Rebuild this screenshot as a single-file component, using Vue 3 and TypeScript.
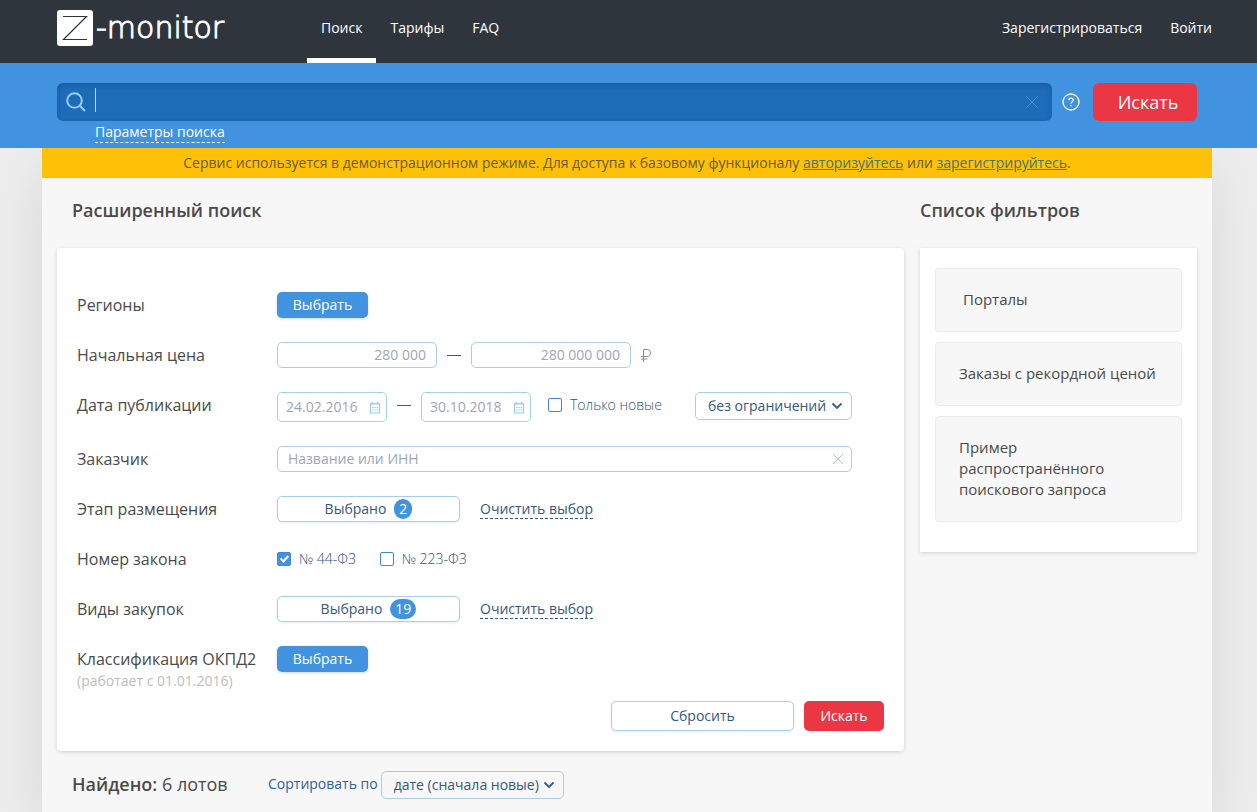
<script setup lang="ts">
import { ref } from 'vue'

interface NavItem {
  label: string
  active?: boolean
}

const nav: NavItem[] = [
  { label: 'Поиск', active: true },
  { label: 'Тарифы' },
  { label: 'FAQ' },
]

const query = ref('')
const priceFrom = ref('')
const priceTo = ref('')
const dateFrom = ref('')
const dateTo = ref('')
const customer = ref('')
const onlyNew = ref(false)
const law44 = ref(true)
const law223 = ref(false)
const period = ref('none')
const sort = ref('new')
const stages = ref(2)
const kinds = ref(19)

const filters: string[] = [
  'Порталы',
  'Заказы с рекордной ценой',
  'Пример распространённого поискового запроса',
]

function reset(): void {
  priceFrom.value = ''
  priceTo.value = ''
  dateFrom.value = ''
  dateTo.value = ''
  customer.value = ''
  onlyNew.value = false
}
</script>

<template>
  <div class="page">
    <header class="top">
      <div class="wrap top-inner">
        <a class="logo" href="#" aria-label="Z-monitor">
          <svg class="logo-mark" viewBox="0 0 36 36" aria-hidden="true">
            <rect width="36" height="36" rx="3" fill="#fff" />
            <path d="M6 6.5H29.5L6.5 29.5H30" fill="none" stroke="#2f353d" stroke-width="1.2" />
          </svg>
          <span class="logo-text">-monitor</span>
        </a>
        <nav class="nav">
          <a v-for="item in nav" :key="item.label" href="#" :class="{ active: item.active }">{{ item.label }}</a>
        </nav>
        <div class="account">
          <a href="#">Зарегистрироваться</a>
          <a href="#">Войти</a>
        </div>
      </div>
    </header>

    <section class="search">
      <div class="wrap search-inner">
        <form class="search-row" @submit.prevent>
          <div class="search-box">
            <svg class="lens" viewBox="0 0 20 20" aria-hidden="true">
              <circle cx="8.5" cy="8.5" r="7.3" />
              <path d="M13.5 13.5L19 19" />
            </svg>
            <span class="caret"></span>
            <input v-model="query" type="text" aria-label="Поиск" />
            <button class="clear" type="button" aria-label="Очистить" @click="query = ''">
              <svg viewBox="0 0 14 14"><path d="M1 1L13 13M13 1L1 13" /></svg>
            </button>
          </div>
          <button class="help" type="button" aria-label="Помощь">
            <svg viewBox="0 0 18 18">
              <circle cx="9" cy="9" r="8" />
              <path d="M6.8 7.3C6.8 5.9 7.7 5.1 9 5.1S11.3 5.9 11.3 7.1C11.3 8.7 9.1 8.8 9.1 10.6" />
              <path d="M9.1 12V13.3" />
            </svg>
          </button>
          <button class="find" type="submit">Искать</button>
        </form>
        <a class="params" href="#">Параметры поиска</a>
      </div>
    </section>

    <div class="body">
      <main class="wrap main">
        <p class="banner">
          Сервис используется в демонстрационном режиме. Для доступа к базовому функционалу
          <a href="#">авторизуйтесь</a> или <a href="#">зарегистрируйтесь</a>.
        </p>
        <div class="columns">
          <section>
            <h2 class="title indented">Расширенный поиск</h2>
            <form class="card form" @submit.prevent>
              <div class="row">
                <span class="label">Регионы</span>
                <button class="pick" type="button">Выбрать</button>
              </div>
              <div class="row">
                <label class="label" for="price-from">Начальная цена</label>
                <div class="controls">
                  <input id="price-from" v-model="priceFrom" class="field price" placeholder="280 000" />
                  <span class="dash"></span>
                  <input v-model="priceTo" class="field price" placeholder="280 000 000" aria-label="Цена до" />
                  <svg class="ruble" viewBox="0 0 10 13" aria-label="₽">
                    <path d="M2.5 13V.5H6.2C8.4.5 9.5 1.8 9.5 3.8S8.4 7.5 6.2 7.5H0M0 10H6.5" />
                  </svg>
                </div>
              </div>
              <div class="row">
                <label class="label" for="date-from">Дата публикации</label>
                <div class="controls top-aligned">
                  <span class="date">
                    <input id="date-from" v-model="dateFrom" placeholder="24.02.2016" />
                    <svg viewBox="0 0 12 13" aria-hidden="true">
                      <path d="M1.5 2.5H10.5V12H1.5ZM1 3H11M3.5 .5V3M8.5 .5V3" />
                      <path d="M3 6.5H9M3 9H9" stroke-dasharray="1.4 .9" />
                    </svg>
                  </span>
                  <span class="dash"></span>
                  <span class="date">
                    <input v-model="dateTo" placeholder="30.10.2018" aria-label="Дата до" />
                    <svg viewBox="0 0 12 13" aria-hidden="true">
                      <path d="M1.5 2.5H10.5V12H1.5ZM1 3H11M3.5 .5V3M8.5 .5V3" />
                      <path d="M3 6.5H9M3 9H9" stroke-dasharray="1.4 .9" />
                    </svg>
                  </span>
                  <label class="check only-new"><input v-model="onlyNew" type="checkbox" />Только новые</label>
                  <span class="select period">
                    <select v-model="period" aria-label="Период">
                      <option value="none">без ограничений</option>
                    </select>
                    <svg viewBox="0 0 12 8" aria-hidden="true"><path d="M1.5 1.5L6 6L10.5 1.5" /></svg>
                  </span>
                </div>
              </div>
              <div class="row">
                <label class="label" for="customer">Заказчик</label>
                <div class="controls customer">
                  <input id="customer" v-model="customer" class="field" placeholder="Название или ИНН" />
                  <button class="clear" type="button" aria-label="Очистить" @click="customer = ''">
                    <svg viewBox="0 0 14 14"><path d="M2 2L12 12M12 2L2 12" /></svg>
                  </button>
                </div>
              </div>
              <div class="row">
                <span class="label">Этап размещения</span>
                <div class="controls spaced">
                  <button class="outline" type="button">Выбрано <span class="count">{{ stages }}</span></button>
                  <a class="reset-link" href="#">Очистить выбор</a>
                </div>
              </div>
              <div class="row">
                <span class="label">Номер закона</span>
                <div class="controls laws">
                  <label class="check"><input v-model="law44" type="checkbox" />№ 44-ФЗ</label>
                  <label class="check"><input v-model="law223" type="checkbox" />№ 223-ФЗ</label>
                </div>
              </div>
              <div class="row">
                <span class="label">Виды закупок</span>
                <div class="controls spaced">
                  <button class="outline" type="button">Выбрано <span class="count">{{ kinds }}</span></button>
                  <a class="reset-link" href="#">Очистить выбор</a>
                </div>
              </div>
              <div class="row">
                <span class="label">Классификация ОКПД2<small>(работает с 01.01.2016)</small></span>
                <button class="pick" type="button">Выбрать</button>
              </div>
              <div class="actions">
                <button class="outline" type="button" @click="reset">Сбросить</button>
                <button class="submit" type="submit">Искать</button>
              </div>
            </form>
            <div class="results">
              <p class="found"><b>Найдено:</b> 6 лотов</p>
              <label for="sort">Сортировать по</label>
              <span class="select sort">
                <select id="sort" v-model="sort">
                  <option value="new">дате (сначала новые)</option>
                </select>
                <svg viewBox="0 0 12 8" aria-hidden="true"><path d="M1.5 1.5L6 6L10.5 1.5" /></svg>
              </span>
            </div>
          </section>

          <aside>
            <h2 class="title">Список фильтров</h2>
            <div class="card filters">
              <a v-for="(name, i) in filters" :key="name" href="#" :class="{ group: i === 0 }">{{ name }}</a>
            </div>
          </aside>
        </div>
      </main>
    </div>
  </div>
</template>

<style>
html,
body {
  height: 100%;
  overflow: hidden;
  background: #ededed;
}
#app {
  height: 100%;
}
</style>

<style scoped>
.page {
  min-height: 100%;
  display: flex;
  flex-direction: column;
  font: 14px/20px "Open Sans", "Noto Sans", sans-serif;
  color: #4a4a4a;
}
.page *,
.page *::before {
  box-sizing: border-box;
}
a {
  color: inherit;
  text-decoration: none;
}
button,
input,
select {
  font: inherit;
  margin: 0;
}
button {
  cursor: pointer;
  border: 0;
  padding: 0;
  background: none;
}
svg {
  display: block;
  fill: none;
}
.top,
.search,
.body {
  padding-right: 3px;
}
.wrap {
  width: 100%;
  max-width: 1170px;
  margin: 0 auto;
}
.top {
  background: #2f353d;
  color: #fff;
}
.top-inner {
  display: flex;
  padding-left: 15px;
  height: 63px;
}
.logo {
  display: flex;
  width: 250px;
  padding-top: 10px;
}
.logo-mark {
  width: 36px;
  height: 36px;
}
.logo-text {
  margin-left: 3px;
  font: 200 30px/36px "DejaVu Sans", sans-serif;
  -webkit-text-stroke: 1px #fff;
}
.nav,
.account {
  display: flex;
}
.nav a {
  padding: 18px 14px 0;
  border-bottom: 5px solid transparent;
}
.nav a.active {
  border-color: #fff;
}
.account {
  margin-left: auto;
  padding-top: 18px;
  gap: 28px;
}
.search {
  position: relative;
  z-index: 1;
  background: #4193e0;
  color: #fff;
}
.search-inner {
  padding: 20px 15px 5px;
}
.search-row {
  display: flex;
}
.search-box {
  flex: 1;
  display: flex;
  align-items: center;
  height: 38px;
  padding: 0 13px 0 9px;
  border-radius: 6px;
  background: #1c6cb8;
  box-shadow: inset 0 2px 5px rgba(0, 40, 90, 0.25);
}
.lens {
  width: 20px;
  height: 20px;
  stroke: #9cccf5;
  stroke-width: 2;
}
.caret {
  width: 1px;
  height: 24px;
  margin: 0 0 4px 9px;
  background: #b5daf8;
}
.search-box input {
  flex: 1;
  min-width: 0;
  height: 100%;
  border: 0;
  outline: 0;
  color: #fff;
  background: transparent;
}
.clear svg {
  width: 14px;
  height: 14px;
  stroke: #4193e0;
  stroke-width: 1;
}
.help {
  margin: 0 13px 0 10px;
}
.help svg {
  width: 18px;
  height: 18px;
  stroke: #fff;
  stroke-width: 1.3;
}
.find {
  width: 104px;
  height: 38px;
  padding-left: 6px;
  border-radius: 6px;
  background: #eb3643;
  color: #fff;
  font-size: 18px;
}
.params {
  display: inline-block;
  vertical-align: top;
  margin: 1px 0 0 38px;
  border-bottom: 1px dashed #fff;
}
.body {
  flex: 1;
  display: flex;
}
.main {
  background: #f7f7f7;
  box-shadow: 0 20px 50px rgba(0, 0, 0, 0.09);
}
.banner {
  margin: 0;
  padding: 5px 0;
  text-align: center;
  background: #ffc107;
  color: #6b5a28;
}
.banner a {
  color: #46776b;
  text-decoration: underline;
}
.columns {
  display: grid;
  grid-template-columns: minmax(0, 1fr) 277px;
  gap: 16px;
  padding: 0 15px;
}
.title {
  margin: 0;
  padding: 20px 0 26px;
  font-size: 18px;
  line-height: 24px;
  font-weight: 600;
}
.indented {
  padding-left: 15px;
}
.card {
  background: #fff;
  border-radius: 4px;
  box-shadow: 0 1px 4px rgba(0, 0, 0, 0.16);
}
.form {
  display: flex;
  flex-direction: column;
  gap: 24px;
  padding: 44px 20px 20px;
}
.row {
  display: flex;
  align-items: flex-start;
}
.label {
  width: 200px;
  flex: none;
  font-size: 16px;
  line-height: 26px;
}
.label small {
  display: block;
  font-size: 14px;
  line-height: 18px;
  color: #bdbdbd;
}
.pick {
  width: 91px;
  height: 26px;
  border-radius: 5px;
  background: #4193e0;
  color: #fff;
  box-shadow: 0 1px 3px rgba(0, 60, 120, 0.2);
}
.controls {
  display: flex;
  align-items: center;
  width: 575px;
}
.field,
.date,
.select,
.outline {
  border: 1px solid #a9cdee;
  border-radius: 5px;
}
.field {
  height: 26px;
  padding: 0 10px 2px;
  background: #fff;
  outline: 0;
}
.price {
  width: 160px;
  text-align: right;
}
::placeholder {
  color: #9ea5b8;
  opacity: 1;
}
.dash {
  width: 14px;
  height: 1px;
  margin: 0 10px;
  background: #2a639c;
}
.ruble {
  width: 10px;
  height: 13px;
  margin-left: 10px;
  stroke: #8a8a8a;
  stroke-width: 1;
}
.top-aligned {
  align-items: flex-start;
}
.top-aligned .dash {
  margin-top: 13px;
}
.date {
  display: flex;
  align-items: center;
  width: 110px;
  height: 30px;
  padding: 0 5px 0 8px;
}
.date input {
  flex: 1;
  min-width: 0;
  padding: 0;
  border: 0;
  outline: 0;
  background: transparent;
}
.date svg {
  width: 12px;
  height: 13px;
  stroke: #9bcaf2;
  stroke-width: 1.2;
}
.check {
  display: flex;
  align-items: center;
  gap: 8px;
  font-weight: 300;
  color: #2c5282;
  line-height: 26px;
}
.check input {
  appearance: none;
  width: 14px;
  height: 14px;
  border: 1px solid #4189cc;
  border-radius: 2px;
  background: #fff;
}
.check input:checked {
  background: #4193e0;
  position: relative;
}
.check input:checked::before {
  content: "";
  position: absolute;
  left: 4px;
  top: 1px;
  width: 5px;
  height: 8px;
  border: solid #fff;
  border-width: 0 2px 2px 0;
  transform: rotate(42deg);
}
.only-new {
  margin-left: 17px;
}
.select {
  display: flex;
  align-items: center;
  height: 28px;
  position: relative;
  color: #34587f;
}
.select select {
  appearance: none;
  width: 100%;
  height: 100%;
  border: 0;
  outline: 0;
  padding: 0 11px 0 12px;
  background: transparent;
  color: inherit;
}
.select svg {
  position: absolute;
  right: 8px;
  width: 12px;
  height: 8px;
  stroke: #2c5f96;
  stroke-width: 1.8;
  pointer-events: none;
}
.period {
  width: 157px;
  margin-left: auto;
}
.sort {
  width: 183px;
  margin-left: 3px;
}
.customer {
  position: relative;
}
.customer .field {
  width: 100%;
}
.customer .clear {
  position: absolute;
  right: 7px;
}
.customer .clear svg {
  stroke: #b8bec6;
}
.spaced {
  gap: 20px;
}
.outline {
  display: flex;
  align-items: center;
  justify-content: center;
  gap: 8px;
  width: 183px;
  height: 26px;
  background: #fff;
  color: #34587f;
  box-shadow: 0 1px 3px rgba(65, 147, 224, 0.15);
}
.count {
  min-width: 18px;
  padding: 0 5px;
  border-radius: 10px;
  line-height: 20px;
  background: #4193e0;
  color: #fff;
}
.reset-link {
  line-height: 19px;
  color: #34587f;
  border-bottom: 1px dashed #34587f;
}
.laws {
  gap: 24px;
}
.actions {
  display: flex;
  justify-content: flex-end;
  gap: 10px;
  margin-top: -13px;
}
.actions .outline {
  height: 30px;
}
.submit {
  width: 80px;
  height: 30px;
  border-radius: 5px;
  background: #eb3643;
  color: #fff;
}
.results {
  display: flex;
  align-items: flex-start;
  padding: 20px 15px 13px;
  line-height: 26px;
  color: #2f61a0;
}
.found {
  width: 196px;
  margin: 0;
  font-size: 18px;
  color: #4a4a4a;
}
.found b {
  font-weight: 600;
}
.filters {
  display: flex;
  flex-direction: column;
  gap: 10px;
  padding: 20px 15px 30px;
  border-radius: 0;
}
.filters a {
  padding: 20px 23px 21px;
  border: 1px solid #ebebeb;
  border-radius: 4px;
  background: #f7f7f7;
  font-size: 15px;
  line-height: 21px;
}
.filters .group {
  padding-left: 27px;
}
</style>
